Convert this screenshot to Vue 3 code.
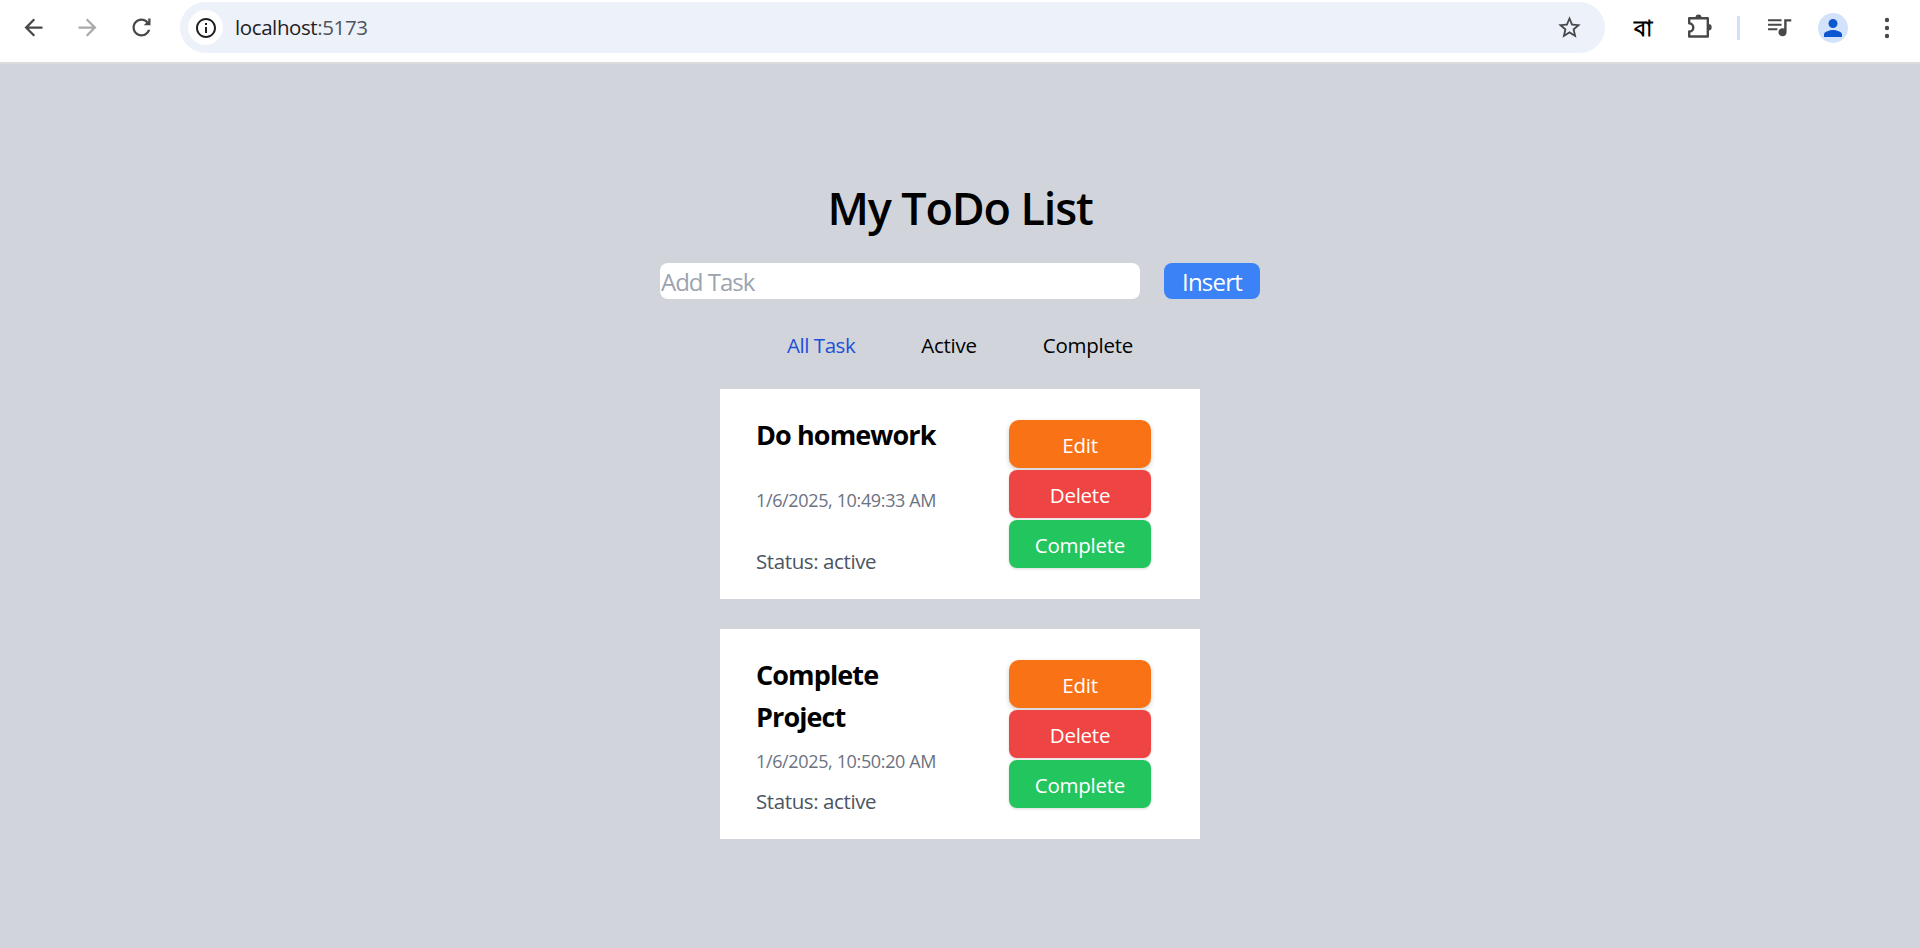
<script setup>
const filters = [
  { label: 'All Task', cls: 'all' },
  { label: 'Active', cls: 'active' },
  { label: 'Complete', cls: 'complete' },
]
const tasks = [
  { title: 'Do homework', time: '1/6/2025, 10:49:33 AM', status: 'active' },
  { title: 'Complete Project', time: '1/6/2025, 10:50:20 AM', status: 'active' },
]
</script>

<template>
  <div class="window">
    <header class="toolbar">
      <div class="nav">
        <svg class="icon" viewBox="0 0 24 24"><path d="M20 11H7.83l5.59-5.59L12 4l-8 8 8 8 1.41-1.41L7.83 13H20v-2z" /></svg>
        <svg class="icon dim" viewBox="0 0 24 24"><path d="M12 4l-1.41 1.41L16.17 11H4v2h12.17l-5.58 5.59L12 20l8-8z" /></svg>
        <svg class="icon" viewBox="0 0 24 24"><path d="M17.65 6.35C16.2 4.9 14.21 4 12 4c-4.42 0-7.99 3.58-7.99 8s3.57 8 7.99 8c3.73 0 6.84-2.55 7.73-6h-2.08c-.82 2.33-3.04 4-5.65 4-3.31 0-6-2.69-6-6s2.69-6 6-6c1.66 0 3.14.69 4.22 1.78L14 10h6V4h-2v2.700z" /></svg>
      </div>
      <div class="address">
        <span class="site-info">
          <svg class="info" viewBox="0 0 24 24"><path d="M11 7h2v2h-2zm0 4h2v6h-2zm1-9C6.48 2 2 6.48 2 12s4.48 10 10 10 10-4.48 10-10S17.52 2 12 2zm0 18c-4.41 0-8-3.59-8-8s3.59-8 8-8 8 3.59 8 8-3.59 8-8 8z" /></svg>
        </span>
        <span class="url">localhost<span class="port">:5173</span></span>
        <svg class="icon star" viewBox="0 0 24 24"><path d="M22 9.24l-7.19-.62L12 2 9.19 8.63 2 9.24l5.46 4.73L5.82 21 12 17.27 18.18 21l-1.63-7.03L22 9.24zM12 15.4l-3.76 2.27 1-4.28-3.32-2.88 4.38-.38L12 6.1l1.71 4.04 4.38.38-3.32 2.88 1 4.28L12 15.4z" /></svg>
      </div>
      <div class="actions">
        <span class="bangla">বা</span>
        <svg class="puzzle" viewBox="0 0 26 26"><path d="M2.200 5.200h18.600v18.300H2.200v-5a3.900 3.900 0 0 0 0-8.200z" /><path class="fill" d="M8.500 4.500a3 3 0 0 1 6 0zM21.500 11a3.200 3.200 0 0 1 0 6.400z" /></svg>
        <span class="divider"></span>
        <svg class="media" viewBox="0 0 24 24"><path d="M1 4h13v2H1zM1 8.300h13v2H1zM1 12.600h9v2H1zM16.500 4h6.800v2.200h-4.500v10.100a3.900 3.900 0 1 1-2.300-3.300z" /></svg>
        <span class="avatar"><svg viewBox="0 0 24 24"><path d="M12 12a4.500 4.500 0 1 0 0-9 4.500 4.500 0 0 0 0 9zM3 21v-2.500c0-3 6-4.500 9-4.500s9 1.500 9 4.500V21z" /></svg></span>
        <svg class="dots" viewBox="0 0 6 22"><circle cx="3" cy="3" r="2.200" /><circle cx="3" cy="11" r="2.200" /><circle cx="3" cy="19" r="2.200" /></svg>
      </div>
    </header>

    <main class="page">
      <h1>My ToDo List</h1>
      <form class="entry" @submit.prevent>
        <input type="text" placeholder="Add Task" />
        <button class="insert" type="submit">Insert</button>
      </form>
      <nav class="filters">
        <span v-for="f in filters" :key="f.label" :class="f.cls">{{ f.label }}</span>
      </nav>
      <section class="list">
        <article v-for="t in tasks" :key="t.title" class="card">
          <div class="details">
            <h2>{{ t.title }}</h2>
            <p class="time">{{ t.time }}</p>
            <p class="status">Status: {{ t.status }}</p>
          </div>
          <div class="buttons">
            <button class="edit">Edit</button>
            <button class="delete">Delete</button>
            <button class="done">Complete</button>
          </div>
        </article>
      </section>
    </main>
  </div>
</template>

<style>
body {
  margin: 0;
  overflow: hidden;
}
</style>

<style scoped>
.window {
  height: 948px;
  display: flex;
  flex-direction: column;
  background: #d1d5db;
  font-family: "Open Sans", "Noto Sans", sans-serif;
  color: #000;
}
.toolbar {
  box-sizing: border-box;
  height: 64px;
  flex: none;
  display: flex;
  background: #fff;
  border-bottom: 2px solid #dcdcdd;
  padding-top: 2px;
}
.nav {
  width: 180px;
  height: 51px;
  box-sizing: border-box;
  padding-left: 19.5px;
  display: flex;
  align-items: center;
  gap: 27px;
}
.icon {
  width: 27px;
  height: 27px;
  fill: #47484a;
  flex: none;
}
.dim { fill: #a9aaab; }
.info {
  width: 24px;
  height: 24px;
  fill: #1f2022;
}
.address {
  width: 1425px;
  height: 51px;
  border-radius: 26px;
  background: #ecf1fa;
  display: flex;
  align-items: center;
  box-sizing: border-box;
  padding: 0 22px 0 8px;
}
.site-info {
  width: 35px;
  height: 35px;
  border-radius: 50%;
  background: #fff;
  display: flex;
  align-items: center;
  justify-content: center;
}
.url {
  margin-left: 12px;
  padding-bottom: 2px;
  font-size: 20.5px;
  letter-spacing: -0.4px;
  color: #1f2022;
}
.port { color: #505458; }
.star { margin-left: auto; }
.actions {
  height: 51px;
  flex: 1;
  display: flex;
  align-items: center;
}
.bangla {
  width: 22px;
  margin-left: 29px;
  padding-bottom: 1px;
  font-size: 22px;
  font-weight: 700;
  line-height: 30px;
}
.puzzle {
  width: 26px;
  height: 26px;
  margin-left: 31px;
  margin-top: -3px;
  fill: none;
  stroke: #47484a;
  stroke-width: 2.4;
  stroke-linejoin: round;
}
.puzzle .fill { fill: #47484a; stroke: none; }
.divider {
  width: 3px;
  height: 24px;
  background: #d3e2f8;
  margin-left: 24px;
}
.media {
  width: 25px;
  height: 25px;
  margin-left: 27px;
  fill: #47484a;
}
.avatar {
  width: 30px;
  height: 30px;
  border-radius: 50%;
  background: #d3e2fb;
  margin-left: 26px;
  display: flex;
  align-items: center;
  justify-content: center;
}
.avatar svg {
  width: 24px;
  height: 24px;
  fill: #0b57d0;
}
.dots {
  width: 6px;
  height: 22px;
  margin-left: 36px;
  fill: #47484a;
}
.page {
  flex: 1;
  display: flex;
  flex-direction: column;
  align-items: center;
  padding-top: 119px;
}
h1, h2, p { margin: 0; }
h1 {
  height: 50px;
  line-height: 50px;
  font-size: 45px;
  font-weight: 600;
  letter-spacing: -1.15px;
}
.entry {
  display: flex;
  gap: 24px;
  margin-top: 30px;
}
input {
  box-sizing: border-box;
  width: 480px;
  height: 36px;
  border: 0;
  border-radius: 8px;
  padding: 0 1px;
  background: #fff;
  font: 24px "Open Sans", sans-serif;
  letter-spacing: -1px;
}
input::placeholder { color: #9ca3af; }
button {
  border: 0;
  color: #fff;
  font: 20.5px "Open Sans", sans-serif;
  letter-spacing: -0.25px;
}
.insert {
  width: 96px;
  height: 36px;
  border-radius: 8px;
  background: #3b82f6;
  font-size: 24px;
  letter-spacing: -0.8px;
  line-height: 34px;
  padding: 1px 0 0;
}
.filters {
  display: flex;
  gap: 66px;
  margin-top: 31px;
  height: 30px;
  line-height: 30px;
  font-size: 20.5px;
  letter-spacing: -0.25px;
}
.filters .all {
  color: #1d4ed8;
  letter-spacing: -0.45px;
}
.list {
  display: flex;
  flex-direction: column;
  gap: 30px;
  margin-top: 29px;
}
.card {
  box-sizing: border-box;
  width: 480px;
  height: 210px;
  background: #fff;
  padding: 25px 49px 23px 36px;
  display: flex;
  justify-content: space-between;
}
.details {
  width: 195px;
  display: flex;
  flex-direction: column;
  justify-content: space-between;
}
h2 {
  font-size: 27px;
  line-height: 42px;
  font-weight: 700;
  letter-spacing: -0.9px;
}
.time {
  font-size: 18px;
  line-height: 25px;
  letter-spacing: -0.36px;
  margin-top: -1px;
  color: #6b7280;
  white-space: nowrap;
}
.status {
  font-size: 20.5px;
  line-height: 30px;
  letter-spacing: -0.4px;
  color: #4b5563;
}
.buttons {
  display: flex;
  flex-direction: column;
  gap: 2px;
  padding-top: 6px;
}
.buttons button {
  width: 142px;
  height: 48px;
  padding: 1px 0 0;
  border-radius: 8px;
  box-shadow: 0 1px 3px rgba(0, 0, 0, 0.15);
}
.buttons .edit {
  background: #f97316;
  border-radius: 10px;
  box-shadow: 0 2px 5px rgba(0, 0, 0, 0.2);
}
.buttons .delete { background: #ef4444; }
.buttons .done { background: #22c55e; }
</style>
